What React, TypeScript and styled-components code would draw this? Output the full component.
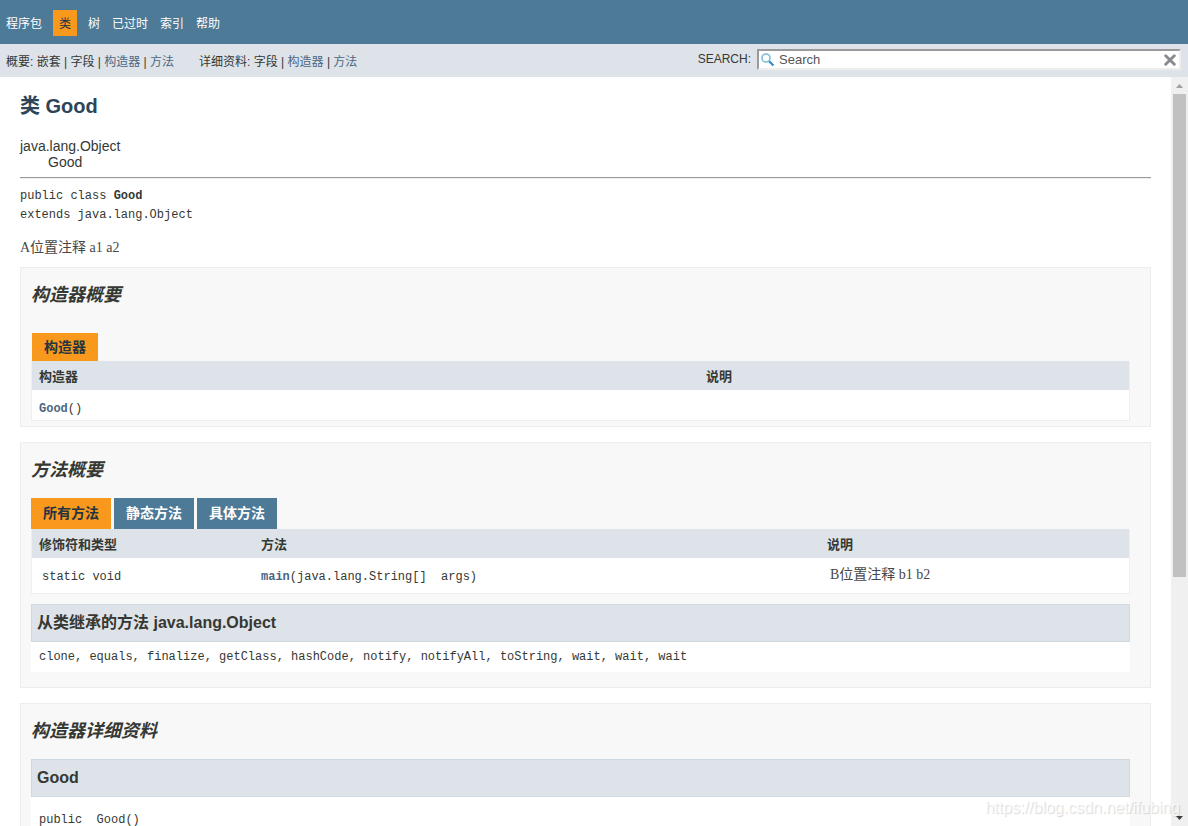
import React from "react";
import styled, { createGlobalStyle, css } from "styled-components";

const sans = `"Liberation Sans", "Noto Sans CJK SC", sans-serif`;
const serif = `"Liberation Serif", "Noto Sans CJK SC", serif`;
const mono = `"Liberation Mono", "Noto Sans CJK SC", monospace`;

const GlobalStyle = createGlobalStyle`
  * { box-sizing: border-box; }
  body {
    margin: 0;
    background: #fff;
    color: #353833;
    font-family: ${sans};
    font-size: 14px;
  }
  h2, h3, h4, p, ul { margin: 0; padding: 0; }
  ul { list-style: none; }
  a { text-decoration: none; }
`;

const Page = styled.div`
  display: flex;
  flex-direction: column;
  height: 100vh;
  overflow: hidden;
`;

const TopNav = styled.nav`
  flex: none;
  padding: 10px 0 8px;
  background: #4d7a97;
`;

const NavList = styled.ul`
  display: flex;
`;

const NavItem = styled.li<{ $active?: boolean }>`
  height: 26px;
  padding: 1px 6px 0;
  font-size: 12px;
  line-height: 26px;
  color: #fff;
  a { color: inherit; }
  ${(p) =>
    p.$active &&
    css`
      margin: 0 5px;
      background: #f8981d;
      color: #253441;
    `}
`;

const SubNav = styled.div`
  display: flex;
  flex: none;
  justify-content: space-between;
  padding: 5px 7px 7px 6px;
  background: #dee3e9;
`;

const SubNavLists = styled.div`
  display: flex;
  gap: 25px;
  height: 21px;
  padding-top: 5px;
`;

const SubNavList = styled.p`
  font-size: 12px;
  line-height: 17px;
  white-space: nowrap;
  a { color: #4a6782; }
`;

const SearchForm = styled.form`
  display: flex;
  gap: 6px;
  font-size: 12px;
  line-height: 21px;
`;

const SearchBox = styled.div`
  display: flex;
  align-items: center;
  width: 424px;
  height: 21px;
  padding: 0 3px 0 2px;
  border: 2px solid;
  border-color: #9a9a9a #eee #eee #9a9a9a;
  background: #fff;
`;

const SearchInput = styled.input`
  flex: 1;
  min-width: 0;
  height: 17px;
  padding: 0 4px;
  border: 0;
  outline: 0;
  background: transparent;
  color: #555;
  font: 13px/17px ${sans};
`;

const ClearButton = styled.button`
  display: flex;
  padding: 0;
  border: 0;
  background: none;
`;

const Body = styled.div`
  display: flex;
  flex: 1;
  min-height: 0;
`;

const Main = styled.main`
  flex: 1;
  min-width: 0;
  overflow: hidden;
  padding: 16px 20px 0;
`;

const Title = styled.h2`
  color: #2c4557;
  font-size: 20px;
  line-height: 26px;
`;

const Inheritance = styled.ul`
  padding-top: 19px;
  line-height: 16px;
  ul { padding-left: 28px; }
`;

const Rule = styled.hr`
  margin: 7px 0 8px;
  border: 0;
  border-top: 1px solid #9a9a9a;
  border-bottom: 1px solid #eee;
`;

const Code = styled.code`
  font-family: ${mono};
  font-size: 12px;
`;

const Signature = styled(Code)`
  display: block;
  line-height: 19px;
`;

const Description = styled.p`
  padding: 13px 0 10px;
  color: #474747;
  font-family: ${serif};
  line-height: 19px;
`;

const Section = styled.section<{ $bottom: number }>`
  margin-bottom: 15px;
  padding: 15px 20px ${(p) => p.$bottom}px 10px;
  border: 1px solid #ededed;
  background: #f8f8f8;
`;

const SectionTitle = styled.h3<{ $gap: number }>`
  margin-bottom: ${(p) => p.$gap}px;
  font-size: 18px;
  font-style: italic;
  line-height: 24px;
`;

const Caption = styled.div`
  display: inline-block;
  margin-left: 1px;
  padding: 0 12px;
  background: #f8981d;
  color: #253441;
  font-weight: bold;
  line-height: 28px;
  vertical-align: top;
`;

const Tabs = styled.div`
  display: flex;
  gap: 3px;
`;

const Tab = styled.button<{ $active?: boolean }>`
  height: 31px;
  padding: 0 12px;
  border: 0;
  background: ${(p) => (p.$active ? "#f8981d" : "#4d7a97")};
  color: ${(p) => (p.$active ? "#253441" : "#fff")};
  font: bold 14px/31px ${sans};
`;

const Table = styled.table<{ $row: number }>`
  width: 100%;
  table-layout: fixed;
  border: 1px solid #eee;
  border-top: 0;
  border-spacing: 0;
  background: #fff;
  th {
    height: 29px;
    padding: 2px 7px 0;
    background: #dee3e9;
    font-size: 13px;
    line-height: 18px;
    text-align: left;
  }
  td {
    height: ${(p) => p.$row}px;
    padding: 9px 7px 0;
    line-height: 16px;
    vertical-align: top;
  }
`;

const Col = styled.col<{ $width?: number }>`
  width: ${(p) => (p.$width ? `${p.$width}px` : "auto")};
`;

const Inset = styled.div<{ $prose?: boolean }>`
  padding-left: 3px;
  ${(p) =>
    p.$prose &&
    css`
      color: #474747;
      font-family: ${serif};
    `}
`;

const MemberLink = styled.a`
  color: #4a6782;
  font-weight: bold;
`;

const Bar = styled.h4<{ $top?: number }>`
  margin-top: ${(p) => p.$top ?? 0}px;
  padding: 0 5px;
  border: 1px solid #d0d9e0;
  background: #dee3e9;
  font-size: 16px;
  line-height: 36px;
`;

const Panel = styled.div<{ $top?: number }>`
  padding: ${(p) => p.$top ?? 0}px 8px 0;
  background: #fff;
  font-family: ${mono};
  font-size: 12px;
  line-height: 30px;
  white-space: pre;
`;

const ScrollTrack = styled.div`
  display: flex;
  flex: none;
  flex-direction: column;
  width: 17px;
  background: #f0f0f0;
`;

const ScrollArrow = styled.div<{ $down?: boolean }>`
  display: flex;
  align-items: center;
  justify-content: center;
  height: 17px;
  color: ${(p) => (p.$down ? "#404040" : "#a0a0a0")};
`;

const ScrollRail = styled.div`
  flex: 1;
  padding: 0 2px;
`;

const ScrollThumb = styled.div`
  height: 67.5%;
  background: #c1c1c1;
`;

const Watermark = styled.div`
  position: absolute;
  right: 8px;
  bottom: 8px;
  color: rgba(255, 255, 255, 0.8);
  font-size: 16px;
  line-height: 20px;
  text-shadow: 1px 1px 1px rgba(0, 0, 0, 0.16);
  pointer-events: none;
`;

const SearchIcon = () => (
  <svg width="14" height="14" viewBox="0 0 14 14" fill="none">
    <circle cx="5" cy="5" r="4" stroke="#7dbbdb" strokeWidth="1.6" />
    <path d="M8.2 8.2 12.4 12.6" stroke="#2d8fc7" strokeWidth="2.2" />
  </svg>
);

const ClearIcon = () => (
  <svg width="12" height="12" viewBox="0 0 12 12" fill="none">
    <path d="M1.7 1.7 10.3 10.3M10.3 1.7 1.7 10.3" stroke="#878b8f" strokeWidth="2.9" strokeLinecap="round" />
  </svg>
);

const inherited =
  "clone, equals, finalize, getClass, hashCode, notify, notifyAll, toString, wait, wait, wait";

export default function App() {
  return (
    <Page>
      <GlobalStyle />
      <TopNav>
        <NavList>
          <NavItem><a href="#package">程序包</a></NavItem>
          <NavItem $active>类</NavItem>
          <NavItem><a href="#tree">树</a></NavItem>
          <NavItem><a href="#deprecated">已过时</a></NavItem>
          <NavItem><a href="#index">索引</a></NavItem>
          <NavItem><a href="#help">帮助</a></NavItem>
        </NavList>
      </TopNav>
      <SubNav>
        <SubNavLists>
          <SubNavList>
            概要: 嵌套 | 字段 | <a href="#constructors">构造器</a> | <a href="#methods">方法</a>
          </SubNavList>
          <SubNavList>
            详细资料: 字段 | <a href="#constructor-detail">构造器</a> | <a href="#method-detail">方法</a>
          </SubNavList>
        </SubNavLists>
        <SearchForm>
          <label htmlFor="search">SEARCH:</label>
          <SearchBox>
            <SearchIcon />
            <SearchInput id="search" type="text" defaultValue="Search" />
            <ClearButton type="reset" aria-label="reset"><ClearIcon /></ClearButton>
          </SearchBox>
        </SearchForm>
      </SubNav>

      <Body>
        <Main>
          <Title>类 Good</Title>
          <Inheritance>
            <li>java.lang.Object</li>
            <li><ul><li>Good</li></ul></li>
          </Inheritance>
          <Rule />
          <Signature>
            public class <b>Good</b>
            <br />
            extends java.lang.Object
          </Signature>
          <Description>A位置注释 a1 a2</Description>

          <Section id="constructors" $bottom={5}>
            <SectionTitle $gap={26}>构造器概要</SectionTitle>
            <Caption>构造器</Caption>
            <Table $row={30}>
              <colgroup><Col /><Col $width={430} /></colgroup>
              <thead>
                <tr><th scope="col">构造器</th><th scope="col">说明</th></tr>
              </thead>
              <tbody>
                <tr>
                  <td><Code><MemberLink href="#constructor-detail">Good</MemberLink>()</Code></td>
                  <td />
                </tr>
              </tbody>
            </Table>
          </Section>

          <Section id="methods" $bottom={15}>
            <SectionTitle $gap={16}>方法概要</SectionTitle>
            <Tabs>
              <Tab type="button" $active>所有方法</Tab>
              <Tab type="button">静态方法</Tab>
              <Tab type="button">具体方法</Tab>
            </Tabs>
            <Table $row={35}>
              <colgroup><Col $width={222} /><Col /><Col $width={309} /></colgroup>
              <thead>
                <tr>
                  <th scope="col">修饰符和类型</th>
                  <th scope="col">方法</th>
                  <th scope="col">说明</th>
                </tr>
              </thead>
              <tbody>
                <tr>
                  <td><Inset><Code>static void</Code></Inset></td>
                  <td>
                    <Code>
                      <MemberLink href="#method-detail">main</MemberLink>
                      {"(java.lang.String[]\u00a0 args)"}
                    </Code>
                  </td>
                  <td><Inset $prose>B位置注释 b1 b2</Inset></td>
                </tr>
              </tbody>
            </Table>
            <Bar $top={10}>从类继承的方法 java.lang.Object</Bar>
            <Panel>{inherited}</Panel>
          </Section>

          <Section id="constructor-detail" $bottom={15}>
            <SectionTitle $gap={16}>构造器详细资料</SectionTitle>
            <Bar>Good</Bar>
            <Panel $top={8}>{"public  Good()"}</Panel>
          </Section>
        </Main>
        <ScrollTrack aria-hidden="true">
          <ScrollArrow>
            <svg width="7" height="4" viewBox="0 0 7 4"><path d="M0 4 3.5 0 7 4Z" fill="currentColor" /></svg>
          </ScrollArrow>
          <ScrollRail><ScrollThumb /></ScrollRail>
          <ScrollArrow $down>
            <svg width="7" height="4" viewBox="0 0 7 4"><path d="M0 0 3.5 4 7 0Z" fill="currentColor" /></svg>
          </ScrollArrow>
        </ScrollTrack>
      </Body>
      <Watermark>https://blog.csdn.net/ifubing</Watermark>
    </Page>
  );
}
